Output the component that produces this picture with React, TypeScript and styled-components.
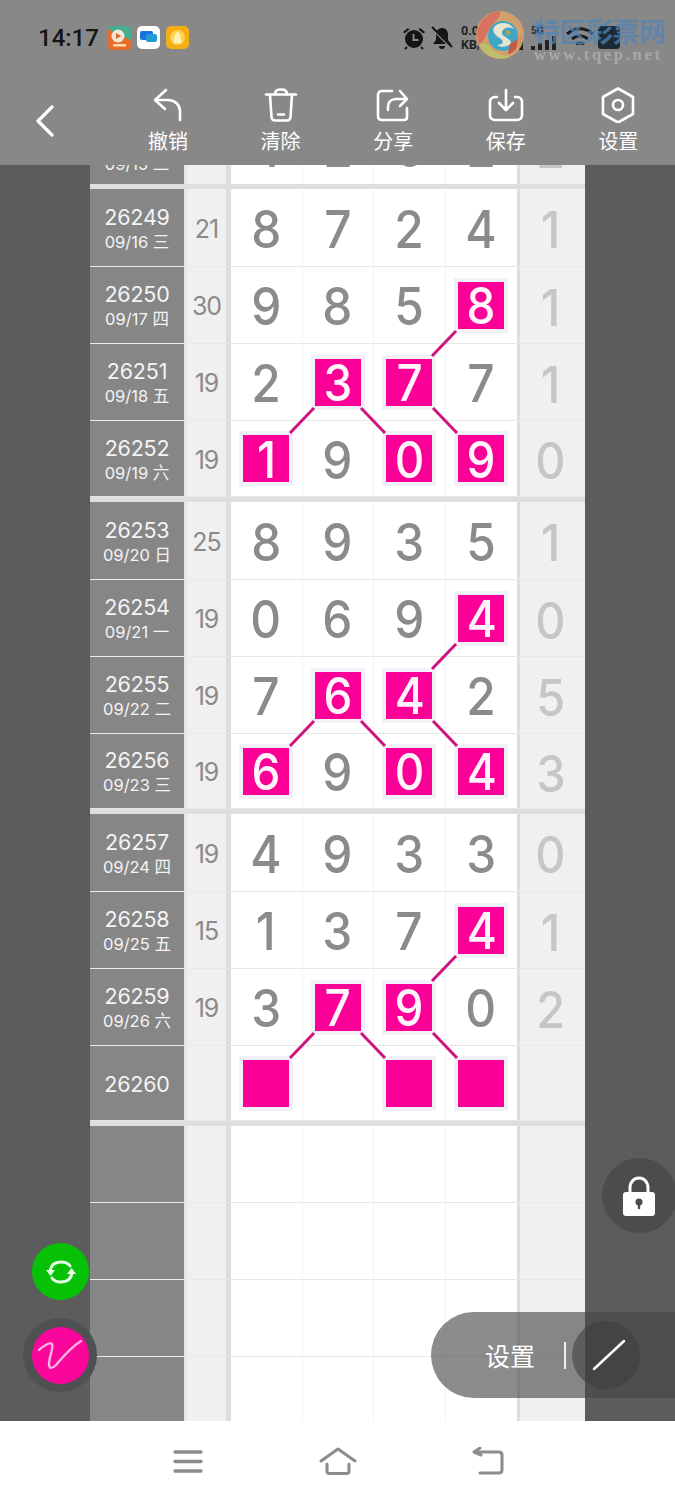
import React from "react";
import styled, { createGlobalStyle } from "styled-components";

const FONT = `Inter, "Noto Sans CJK SC", sans-serif`;
const PINK = "#fb0097";
const LINE = "#cf1480";

const Global = createGlobalStyle`
  html, body { margin: 0; padding: 0; background: #fff; }
  body { font-family: ${FONT}; }
`;

const Screen = styled.div`
  width: 675px; height: 1500px; position: relative; overflow: hidden;
  display: flex; flex-direction: column; background: #fff;
`;

/* ---------- header ---------- */
const Header = styled.header`
  height: 165px; flex: none; background: #888; position: relative;
  display: flex; flex-direction: column;
`;
const StatusBar = styled.div`
  height: 76px; padding: 0 55px 1px 38px; display: flex; align-items: center;
  box-sizing: border-box;
`;
const Clock = styled.span`
  font: 500 24px/1 Roboto, sans-serif; color: #151515; width: 62px; margin-right: 8px;
`;
const AppIcons = styled.div`display: flex; gap: 6px;`;
const StatusRight = styled.div`
  margin-left: auto; display: flex; align-items: center; color: #151515; gap: 5px;
  > svg:last-child { margin-left: -2px; }
`;
const Speed = styled.div`
  font: 700 12.5px/14px Roboto, sans-serif; color: #222; width: 36px; margin: 0 -4px 0 3px;
`;
const SignalBlock = styled.div`
  display: flex; flex-direction: column; align-items: flex-start; width: 26px; margin-right: 2px;
  font: 700 10px/10px Roboto, sans-serif; color: #222;
  & + svg { margin-left: 1px; }
`;
const Watermark = styled.div`
  position: absolute; left: 476px; top: 9px; width: 199px; height: 56px;
`;
const WmTitle = styled.div`
  position: absolute; left: 57px; top: 6px; font: 700 27px/32px "Noto Sans CJK SC", sans-serif;
  color: #4f86b8; opacity: .7; white-space: nowrap; letter-spacing: -.5px;
`;
const WmUrl = styled.div`
  position: absolute; left: 58px; top: 36px; font: 700 16.5px/20px "Liberation Serif", serif;
  color: #a8a8a8; letter-spacing: 2.7px; white-space: nowrap;
`;
const Toolbar = styled.nav`
  flex: 1; display: grid; grid-template-columns: 112px repeat(5, 112.6px);
`;
const BackCell = styled.div`
  display: flex; align-items: flex-start; padding: 29px 0 0 35px;
`;
const Tool = styled.button`
  all: unset; display: flex; flex-direction: column; align-items: center; color: #fff; width: 112px;
  height: 78px; margin-top: 11px; font: 400 20px/24px "Noto Sans CJK SC", sans-serif;
`;
const ToolGlyph = styled.span`
  height: 36px; margin-bottom: 6px; display: flex; align-items: center; justify-content: center;
`;

/* ---------- lottery chart ---------- */
const Stage = styled.main`
  height: 1256px; flex: none; background: #5c5c5c; padding: 0 90px; box-sizing: border-box;
  position: relative; overflow: hidden;
`;
const Chart = styled.div`
  height: 100%; overflow: hidden; background: #fff; display: flex; flex-direction: column;
`;
const Group = styled.section`
  position: relative; flex: none; border-bottom: 5px solid #dedede;
  &:last-child { border-bottom: 0; }
`;
const Row = styled.div<{ $h?: number }>`
  height: ${p => p.$h ?? 76}px; display: grid;
  grid-template-columns: 94px 3px 39px 5px repeat(4, 71.5px) 3px 65px;
  grid-template-rows: minmax(0, 1fr);
  border-bottom: 1px solid #e8e8e8;
  overflow: hidden;
  &:last-child { border-bottom: 0; }
`;
const IdCell = styled.div<{ $clip?: boolean }>`
  background: #868686; color: #f4f4f4; display: flex; flex-direction: column; align-items: center;
  justify-content: ${p => (p.$clip ? "flex-end" : "center")}; overflow: hidden;
`;
const Issue = styled.div`font: 400 21.5px/26px ${FONT}; letter-spacing: -.2px; margin-top: 1px;`;
const DateText = styled.div<{ $clip?: boolean }>`
  font: 400 16.5px/22px ${FONT}; white-space: nowrap;
  margin-top: ${p => (p.$clip ? "0" : "1px")};
  margin-bottom: ${p => (p.$clip ? "9px" : "0")};
`;
const Gutter = styled.div`background: #e6e6e6;`;
const Divider = styled.div`background: #dedede;`;
const CountCell = styled.div`
  background: #f0f0f0; color: #8a8a8a; display: flex; align-items: center; justify-content: center;
  font: 400 25px/1 ${FONT}; letter-spacing: -1px; padding-top: 3px; box-sizing: border-box;
`;
const Ball = styled.div<{ $clip?: boolean }>`
  color: #8b8b8b; display: flex; align-items: ${p => (p.$clip ? "flex-end" : "center")}; justify-content: center;
  font: 500 52px/1 ${FONT}; border-right: 1px solid #f4f4f4; box-sizing: border-box;
  overflow: hidden;
  &:nth-child(8) { border-right: 0; }
  span {
    display: block; transform: scaleX(.92);
    margin-bottom: ${p => (p.$clip ? "9px" : "0")}; margin-top: ${p => (p.$clip ? "0" : "4px")};
  }
`;
const Hit = styled.div`
  width: 46px; height: 47px; background: ${PINK}; color: #fff5fb; display: flex; align-items: center; justify-content: center;
  font: 500 51px/1 ${FONT}; box-shadow: 0 0 0 4px #f3f1f8;
  b { font-weight: 500; display: block; transform: scaleX(.9); margin-top: 1px; }
`;
const Tail = styled.div<{ $clip?: boolean }>`
  background: #f0f0f0; color: #c6c6c6; display: flex; align-items: ${p => (p.$clip ? "flex-end" : "center")}; justify-content: center;
  font: 500 51px/1 ${FONT}; padding-right: 4px; box-sizing: border-box; overflow: hidden;
  span {
    display: block; transform: scaleX(.92);
    margin-bottom: ${p => (p.$clip ? "9px" : "0")}; margin-top: ${p => (p.$clip ? "0" : "4px")};
  }
`;
const Links = styled.svg`
  position: absolute; left: 0; top: 0; width: 495px; height: 308px; pointer-events: none;
`;

/* ---------- floating controls ---------- */
const SyncButton = styled.div`
  position: absolute; left: 32px; top: 1078px; width: 57px; height: 57px; border-radius: 50%;
  background: #06c106; display: flex; align-items: center; justify-content: center;
`;
const PenHalo = styled.div`
  position: absolute; left: 23px; top: 1153px; width: 74px; height: 74px; border-radius: 50%;
  background: #4e5052; display: flex; align-items: center; justify-content: center;
`;
const PenButton = styled.div`
  width: 57px; height: 57px; border-radius: 50%; background: #f9079b;
  display: flex; align-items: center; justify-content: center;
`;
const LockButton = styled.div`
  position: absolute; left: 602px; top: 993px; width: 75px; height: 75px; border-radius: 50%;
  background: #4c4c4c; display: flex; align-items: center; justify-content: center; padding: 2px 2px 0 0; box-sizing: border-box;
`;
const Pill = styled.div`
  position: absolute; left: 431px; top: 1147px; width: 244px; height: 86px;
  border-radius: 43px 0 0 43px; background: rgba(70,70,70,.62); color: #fff;
  display: flex; align-items: center; padding-left: 54px; box-sizing: border-box;
  font: 400 25px/1 "Noto Sans CJK SC", sans-serif;
`;
const PillBar = styled.div`width: 2px; height: 27px; background: #eee; margin-left: 29px;`;
const PillRound = styled.div`
  width: 68px; height: 68px; border-radius: 50%; background: rgba(60,60,60,.55); margin-left: 6px;
  display: flex; align-items: center; justify-content: center; padding-left: 6px; box-sizing: border-box;
`;

/* ---------- navigation bar ---------- */
const NavBar = styled.footer`
  flex: 1; display: grid; grid-template-columns: repeat(3, 150px); justify-content: center; align-items: center;
  justify-items: center; padding-top: 1px; background: #fff;
`;

/* ---------- data ---------- */
type Entry = { id: string; date?: string; count?: number; balls: (number | null)[]; hits: number[]; tail?: number };

const groups: Entry[][] = [
  [
    { id: "26249", date: "09/16 三", count: 21, balls: [8, 7, 2, 4], hits: [], tail: 1 },
    { id: "26250", date: "09/17 四", count: 30, balls: [9, 8, 5, 8], hits: [3], tail: 1 },
    { id: "26251", date: "09/18 五", count: 19, balls: [2, 3, 7, 7], hits: [1, 2], tail: 1 },
    { id: "26252", date: "09/19 六", count: 19, balls: [1, 9, 0, 9], hits: [0, 2, 3], tail: 0 },
  ],
  [
    { id: "26253", date: "09/20 日", count: 25, balls: [8, 9, 3, 5], hits: [], tail: 1 },
    { id: "26254", date: "09/21 一", count: 19, balls: [0, 6, 9, 4], hits: [3], tail: 0 },
    { id: "26255", date: "09/22 二", count: 19, balls: [7, 6, 4, 2], hits: [1, 2], tail: 5 },
    { id: "26256", date: "09/23 三", count: 19, balls: [6, 9, 0, 4], hits: [0, 2, 3], tail: 3 },
  ],
  [
    { id: "26257", date: "09/24 四", count: 19, balls: [4, 9, 3, 3], hits: [], tail: 0 },
    { id: "26258", date: "09/25 五", count: 15, balls: [1, 3, 7, 4], hits: [3], tail: 1 },
    { id: "26259", date: "09/26 六", count: 19, balls: [3, 7, 9, 0], hits: [1, 2], tail: 2 },
    { id: "26260", balls: [null, null, null, null], hits: [0, 2, 3] },
  ],
];

/* row heights per group: the first group's last row is one pixel taller */
const rowHeights = (group: number) => [77, 76, 76, group === 0 ? 75 : 74];

/* connector strokes, relative to the top of a four-row group */
const linkSegments = [
  [366, 142, 342, 167],
  [224, 219, 200, 244],
  [271, 219, 295, 244],
  [343, 219, 367, 244],
];

const GroupLinks = () => (
  <Links viewBox="0 0 495 308">
    {linkSegments.map(([a, b, c, d], i) => (
      <line key={i} x1={a} y1={b} x2={c} y2={d} stroke={LINE} strokeWidth={3} />
    ))}
  </Links>
);

const EntryRow = ({ e, h }: { e: Entry; h?: number }) => (
  <Row $h={h}>
    <IdCell>
      <Issue>{e.id}</Issue>
      {e.date && <DateText>{e.date}</DateText>}
    </IdCell>
    <Gutter />
    <CountCell>{e.count}</CountCell>
    <Divider />
    {e.balls.map((b, i) => (
      <Ball key={i}>{e.hits.includes(i) ? <Hit><b>{b}</b></Hit> : <span>{b}</span>}</Ball>
    ))}
    <Divider />
    <Tail><span>{e.tail}</span></Tail>
  </Row>
);

const BlankRow = ({ h }: { h: number }) => (
  <Row $h={h}>
    <IdCell />
    <Gutter />
    <CountCell />
    <Divider />
    <Ball /><Ball /><Ball /><Ball />
    <Divider />
    <Tail />
  </Row>
);

const Icon = {
  Back: () => (
    <svg width="20" height="32" viewBox="0 0 20 32" fill="none" stroke="#fff" strokeWidth="3.2" strokeLinecap="round" strokeLinejoin="round">
      <path d="M17 2 3 16l14 14" />
    </svg>
  ),
  Undo: () => (
    <svg width="32" height="34" viewBox="0 0 32 34" fill="none" stroke="#fff" strokeWidth="2.6" strokeLinecap="round" strokeLinejoin="round">
      <path d="M14 2 3 12l10 9" /><path d="M3.500 12H16c7 0 12 5 12 11v9" />
    </svg>
  ),
  Trash: () => (
    <svg width="34" height="34" viewBox="0 0 34 34" fill="none" stroke="#fff" strokeWidth="2.6" strokeLinecap="round" strokeLinejoin="round">
      <path d="M2 6.500h30" /><path d="M11 6c0-3 2-4.500 6-4.500S23 3 23 6" /><path d="M6 7l1.500 22c0 2 1.500 3.500 3.500 3.500h12c2 0 3.500-1.500 3.500-3.500L28 7" /><path d="M14 26.500h6" />
    </svg>
  ),
  Share: () => (
    <svg width="34" height="34" viewBox="0 0 34 34" fill="none" stroke="#fff" strokeWidth="2.6" strokeLinecap="round" strokeLinejoin="round">
      <path d="M16 3H6C3.500 3 2 4.500 2 7v21c0 2.500 1.500 4 4 4h22c2 0 3-1 3-3v-9" />
      <path d="M12 22v-3c0-5 3-8 8-8h10" /><path d="M24 3l7 8-7 7" />
    </svg>
  ),
  Save: () => (
    <svg width="36" height="34" viewBox="0 0 36 34" fill="none" stroke="#fff" strokeWidth="2.6" strokeLinecap="round" strokeLinejoin="round">
      <path d="M18 2v20" /><path d="M11 15l7 7 7-7" />
      <path d="M9 9H7c-3 0-5 2-5 5v13c0 3 2 5 5 5h22c3 0 5-2 5-5V14c0-3-2-5-5-5h-2" />
    </svg>
  ),
  Gear: () => (
    <svg width="34" height="36" viewBox="0 0 34 36" fill="none" stroke="#fff" strokeWidth="2.6" strokeLinejoin="round">
      <path d="M17 1.500 32 10v17l-15 8.500L2 27V10z" /><circle cx="17" cy="18" r="5" />
    </svg>
  ),
  Alarm: () => (
    <svg width="24" height="24" viewBox="0 0 24 24" fill="#151515">
      <circle cx="12" cy="13" r="9" /><path d="M1 6l5-4 1.500 1.500-5 4zM23 6l-5-4-1.500 1.500 5 4z" />
      <path d="M5 21l-2 2M19 21l2 2" stroke="#151515" strokeWidth="2" />
      <path d="M11.500 8v6h5" stroke="#888" strokeWidth="2" fill="none" />
    </svg>
  ),
  Mute: () => (
    <svg width="22" height="24" viewBox="0 0 22 24" fill="#151515">
      <path d="M11 2c4 0 6 3 6 7v5l3 4H2l3-4V9c0-4 2-7 6-7zM8 20h6c0 2-1 3-3 3s-3-1-3-3z" />
      <path d="M1 2l20 20" stroke="#888" strokeWidth="3" /><path d="M1 1l20 20" stroke="#151515" strokeWidth="2" />
    </svg>
  ),
  Bars: () => (
    <svg width="26" height="14" viewBox="0 0 26 14" fill="#222">
      <rect x="0" y="10" width="4" height="4" /><rect x="7" y="7" width="4" height="7" />
      <rect x="14" y="4" width="4" height="10" /><rect x="21" y="0" width="4" height="14" />
    </svg>
  ),
  Wifi: () => (
    <svg width="30" height="24" viewBox="0 0 30 24" fill="none" stroke="#1b1b1b" strokeWidth="3">
      <path d="M2 8c8-7 18-7 26 0M7 13c5-4 11-4 16 0M11 18c3-2 5-2 8 0" />
    </svg>
  ),
  Battery: () => (
    <svg width="22" height="23" viewBox="0 0 22 23">
      <rect width="22" height="23" rx="3" fill="#1c2a36" />
    </svg>
  ),
  Sync: () => (
    <svg width="32" height="32" viewBox="0 0 32 32" fill="none" stroke="#eaffea" strokeWidth="3" strokeLinecap="round">
      <path d="M5 15c1-6 5-9 11-9 4 0 7 1 9 4" /><path d="M27 17c-1 6-5 9-11 9-4 0-7-1-9-4" />
      <path d="M1 14h9l-4.500 6z" fill="#eaffea" stroke="none" /><path d="M31 18h-9l4.500-6z" fill="#eaffea" stroke="none" />
    </svg>
  ),
  Pen: () => (
    <svg width="46" height="34" viewBox="0 0 46 34" fill="none" stroke="#ffb3e0" strokeWidth="2.400" strokeLinecap="round">
      <path d="M2 12c4-4 11-8 13-6 2 3-3 13-3 20 0 5 3 5 7 1 6-7 14-17 25-24" />
    </svg>
  ),
  Lock: () => (
    <svg width="34" height="42" viewBox="0 0 34 42" fill="#fff">
      <path d="M8 20v-8c0-6 4-10 9-10s9 4 9 10v8" fill="none" stroke="#fff" strokeWidth="3" />
      <rect x="1" y="16" width="32" height="24" rx="3" />
      <circle cx="17" cy="26" r="3.500" fill="#4c4c4c" /><rect x="15.800" y="26" width="2.400" height="7" fill="#4c4c4c" />
    </svg>
  ),
  Slash: () => (
    <svg width="34" height="32" viewBox="0 0 34 32" fill="none" stroke="#fff" strokeWidth="2.500" strokeLinecap="round">
      <path d="M2 30 32 2" />
    </svg>
  ),
  Menu: () => (
    <svg width="30" height="24" viewBox="0 0 30 24" fill="none" stroke="#8c8c8c" strokeWidth="3.400" strokeLinecap="round">
      <path d="M2 3h26M2 12.500h26M2 22h26" />
    </svg>
  ),
  Home: () => (
    <svg width="38" height="28" viewBox="0 0 38 28" fill="none" stroke="#8c8c8c" strokeWidth="3" strokeLinecap="round" strokeLinejoin="round">
      <path d="M2 14 19 2l17 12" /><path d="M8 17v7c0 1.500 1 2.500 2.500 2.500h17c1.500 0 2.500-1 2.500-2.500v-7" />
    </svg>
  ),
  Return: () => (
    <svg width="32" height="28" viewBox="0 0 32 28" fill="none" stroke="#8c8c8c" strokeWidth="3" strokeLinecap="round" strokeLinejoin="round">
      <path d="M8 1 2 5l7 3" /><path d="M3 5h24c1.500 0 3 1 3 3v15c0 2-1.500 3-3 3H8" />
    </svg>
  ),
  AppA: () => (
    <svg width="23" height="24" viewBox="0 0 23 24">
      <rect width="23" height="24" rx="4" fill="#46ad8f" /><path d="M0 3l8 5 15 6v6c0 2-2 4-4 4H4c-2 0-4-2-4-4z" fill="#e76c2a" />
      <circle cx="10" cy="10" r="6.500" fill="#f6e6d8" /><path d="M8 7l5 3-5 3z" fill="#d8662c" />
      <rect x="5" y="18" width="13" height="2.500" fill="#f8d9b0" />
    </svg>
  ),
  AppB: () => (
    <svg width="23" height="23" viewBox="0 0 23 23">
      <rect width="23" height="23" rx="5" fill="#fff" /><rect x="3" y="5" width="13" height="9" rx="2" fill="#1672e0" /><rect x="9" y="8" width="11" height="8" rx="2" fill="#1f9bd0" />
    </svg>
  ),
  AppC: () => (
    <svg width="23" height="23" viewBox="0 0 23 23">
      <rect width="23" height="23" rx="5" fill="#f4ad14" /><circle cx="11.500" cy="11.500" r="7.500" fill="#fcd650" /><path d="M7.500 17c1-7 2-11 4-11s3 4 4 11z" fill="#fff2b8" />
    </svg>
  ),
  Swirl: () => (
    <svg width="50" height="56" viewBox="0 0 50 56" style={{ position: "absolute", left: 0, top: 0 }}>
      <circle cx="24" cy="26" r="24" fill="#d9a36c" opacity=".9" />
      <path d="M24 2a24 24 0 0 0-21 33c6-2 8-14 14-20 4-4 8-8 7-13z" fill="#d76a5a" opacity=".85" />
      <path d="M3 35a24 24 0 0 0 31 13c-8-2-16-4-20-10-2-4-7-5-11-3z" fill="#b9c36a" opacity=".9" />
      <circle cx="27" cy="27" r="15" fill="#3fa6c8" />
      <path d="M18 18c5-6 16-5 20 2-6-3-11-1-12 3-1 5 8 5 9 11-2 4-10 5-14 2 5 0 7-2 5-5-3-3-11-6-8-13z" fill="#e9e4d0" />
      <path d="M30 21l5 2-4 4z" fill="#d2a01f" />
      <path d="M41 30c2 8-3 14-9 15l2-10z" fill="#c25a44" />
    </svg>
  ),
};

const tools: [string, React.FC][] = [
  ["撤销", Icon.Undo], ["清除", Icon.Trash], ["分享", Icon.Share], ["保存", Icon.Save], ["设置", Icon.Gear],
];

export default function App() {
  return (
    <Screen>
      <Global />
      <Header>
        <StatusBar>
          <Clock>14:17</Clock>
          <AppIcons><Icon.AppA /><Icon.AppB /><Icon.AppC /></AppIcons>
          <StatusRight>
            <Icon.Alarm />
            <Icon.Mute />
            <Speed>0.01<br />KB/s</Speed>
            <SignalBlock>5G<Icon.Bars /></SignalBlock>
            <SignalBlock>5G<Icon.Bars /></SignalBlock>
            <Icon.Wifi />
            <Icon.Battery />
          </StatusRight>
        </StatusBar>
        <Watermark>
          <Icon.Swirl />
          <WmTitle>特区彩票网</WmTitle>
          <WmUrl>www.tqep.net</WmUrl>
        </Watermark>
        <Toolbar>
          <BackCell><Icon.Back /></BackCell>
          {tools.map(([label, Glyph]) => (
            <Tool key={label}><ToolGlyph><Glyph /></ToolGlyph>{label}</Tool>
          ))}
        </Toolbar>
      </Header>

      <Stage>
        <Chart>
          <Group>
            <Row $h={19}>
              <IdCell $clip><DateText $clip>09/15 二</DateText></IdCell>
              <Gutter />
              <CountCell />
              <Divider />
              <Ball $clip><span>4</span></Ball>
              <Ball $clip><span>2</span></Ball>
              <Ball $clip><span>6</span></Ball>
              <Ball $clip><span>2</span></Ball>
              <Divider />
              <Tail $clip><span>2</span></Tail>
            </Row>
          </Group>
          {groups.map((g, i) => (
            <Group key={i}>
              {g.map((e, j) => <EntryRow key={e.id} e={e} h={rowHeights(i)[j]} />)}
              <GroupLinks />
            </Group>
          ))}
          <Group>
            <BlankRow h={76} />
            <BlankRow h={76} />
            <BlankRow h={76} />
            <BlankRow h={66} />
          </Group>
        </Chart>

        <SyncButton><Icon.Sync /></SyncButton>
        <PenHalo><PenButton><Icon.Pen /></PenButton></PenHalo>
        <LockButton><Icon.Lock /></LockButton>
        <Pill>
          设置
          <PillBar />
          <PillRound><Icon.Slash /></PillRound>
        </Pill>
      </Stage>

      <NavBar>
        <Icon.Menu />
        <Icon.Home />
        <Icon.Return />
      </NavBar>
    </Screen>
  );
}
